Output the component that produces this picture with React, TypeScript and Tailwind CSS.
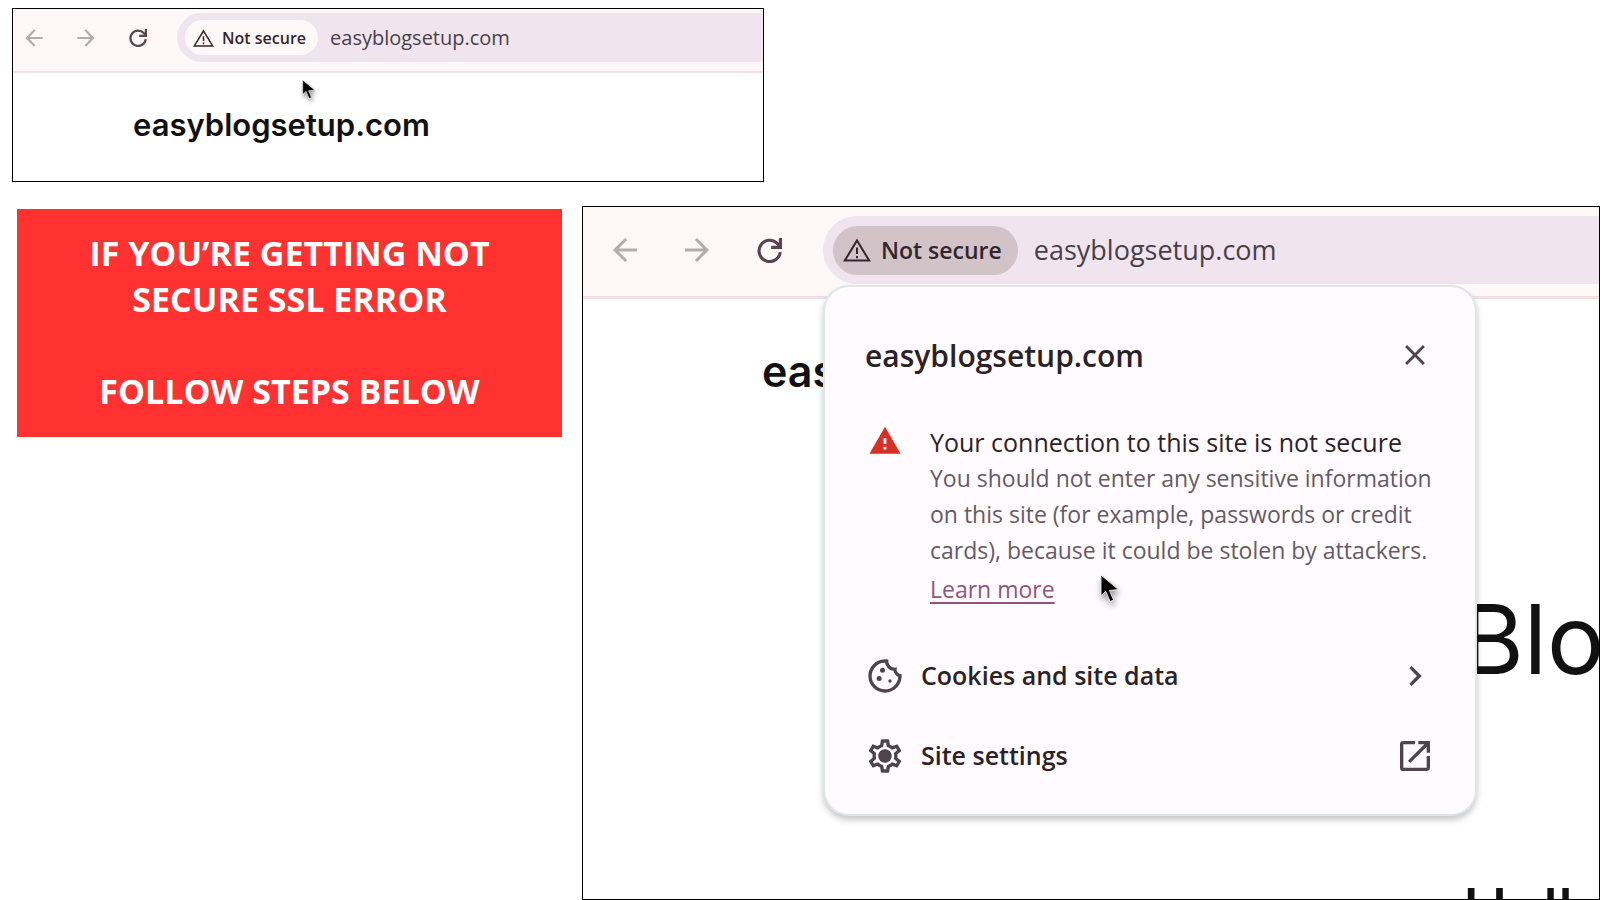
import {
  MdArrowBack,
  MdArrowForward,
  MdChevronRight,
  MdClose,
  MdOpenInNew,
  MdOutlineCookie,
  MdOutlineSettings,
  MdWarning,
} from 'react-icons/md'

const site = 'easyblogsetup.com'

function ReloadIcon({ className }: { className: string }) {
  return (
    <svg viewBox="0 0 24 24" fill="none" stroke="currentColor" strokeWidth="3" className={className} aria-hidden="true">
      <path d="M22.3 13.5A10.2 10.2 0 1 1 19.6 5.4L22.2 8" />
      <path d="M22.5 0V9H13.6" />
    </svg>
  )
}

function AlertIcon({ className }: { className: string }) {
  return (
    <svg viewBox="0 0 28 24" fill="none" stroke="currentColor" strokeWidth="2" className={className} aria-hidden="true">
      <path d="M14 2.4L26.2 22.6H1.8Z" />
      <path d="M14 9.5V16M14 18V20.2" />
    </svg>
  )
}

function GearIcon({ className }: { className: string }) {
  return (
    <svg viewBox="0 0 24 24" className={className} aria-hidden="true">
      <MdOutlineSettings size={24} />
      <circle cx="12" cy="12" r="3.8" fill="currentColor" />
    </svg>
  )
}

function Pointer({ className }: { className: string }) {
  return (
    <svg viewBox="0 0 20 28" className={className} aria-hidden="true">
      <path
        d="M1 0V20.5L5.8 16.4L10.2 26.6L13.6 25L9.4 15.4L18.5 14.6Z"
        fill="#000"
        stroke="#fff"
        strokeWidth="0.8"
      />
    </svg>
  )
}

function SmallBar() {
  return (
    <div className="flex items-center gap-[26px] border-b-2 border-[#f3dfe5] bg-[#fff8f8] pt-1 pb-[9px] pl-2">
      <button aria-label="Back" className="text-[#b3abac]">
        <MdArrowBack size={26} />
      </button>
      <button aria-label="Forward" className="text-[#b3abac]">
        <MdArrowForward size={26} />
      </button>
      <button aria-label="Reload" className="flex w-[26px] justify-center text-[#5a4450]">
        <ReloadIcon className="size-[18px]" />
      </button>
      <div className="flex h-[49px] min-w-0 flex-1 items-center gap-3 rounded-l-full bg-[#f0e5ef] pl-2">
        <button className="flex h-[35px] shrink-0 items-center gap-2 rounded-full bg-[#fff8f8] pr-3 pl-2 text-base font-semibold text-[#33262c]">
          <AlertIcon className="w-[21px]" />
          Not secure
        </button>
        <input
          aria-label="Address"
          readOnly
          defaultValue={site}
          className="min-w-0 flex-1 bg-transparent text-xl text-[#4a3f47] outline-none"
        />
      </div>
    </div>
  )
}

function LargeBar() {
  return (
    <div className="flex items-center gap-9 border-b-3 border-[#f3dfe5] bg-[#fff8f8] pt-[9px] pb-3 pl-6">
      <button aria-label="Back" className="text-[#b3abac]">
        <MdArrowBack size={36} />
      </button>
      <button aria-label="Forward" className="text-[#b3abac]">
        <MdArrowForward size={36} />
      </button>
      <button aria-label="Reload" className="flex w-9 justify-center text-[#5a4450]">
        <ReloadIcon className="size-[25px]" />
      </button>
      <div className="flex h-[68px] min-w-0 flex-1 items-center gap-4 rounded-l-full bg-[#f0e5ef] pl-[10px]">
        <button className="flex h-[49px] shrink-0 items-center gap-[10px] rounded-full bg-[#d2c3c8] pr-4 pl-[10px] text-[23px] font-semibold text-[#33262c]">
          <AlertIcon className="w-7" />
          Not secure
        </button>
        <input
          aria-label="Address"
          readOnly
          defaultValue={site}
          className="min-w-0 flex-1 bg-transparent text-[27px] text-[#4a3f47] outline-none"
        />
      </div>
    </div>
  )
}

function SiteInfo() {
  return (
    <div
      role="dialog"
      aria-labelledby="site-name"
      className="absolute top-20 left-[242px] w-[650px] rounded-3xl bg-[#fffbff] px-10 pt-12 pb-[18px] text-[#2b2228] shadow-[0_0_0_2px_#dfe6e7,0_4px_6px_2px_#00000038]"
    >
      <div className="flex h-10 items-center justify-between">
        <h2 id="site-name" className="text-[30px] font-semibold">
          {site}
        </h2>
        <button aria-label="Close" className="flex w-10 justify-center text-[#4f444a]">
          <MdClose size={34} />
        </button>
      </div>

      <div className="mt-[49px] flex gap-[25px]">
        <div className="flex w-10 shrink-0 justify-center">
          <MdWarning size={34} className="text-[#d93025]" />
        </div>
        <div className="text-[23px] leading-9 whitespace-nowrap">
          <p className="text-[25px] leading-9">Your connection to this site is not secure</p>
          <p className="text-[#655b62]">
            You should not enter any sensitive information
            <br />
            on this site (for example, passwords or credit
            <br />
            cards), because it could be stolen by attackers.
          </p>
          <a href="#learn-more" className="mt-[3px] block w-fit text-[#8f5580] underline underline-offset-4">
            Learn more
          </a>
        </div>
      </div>

      <div className="mt-[29px] text-[25px] font-semibold">
        <button className="flex h-20 w-full items-center gap-4">
          <MdOutlineCookie size={40} className="text-[#4f444a]" />
          Cookies and site data
          <MdChevronRight size={40} className="ml-auto text-[#4f444a]" />
        </button>
        <button className="flex h-20 w-full items-center gap-4">
          <GearIcon className="size-10 text-[#4f444a]" />
          Site settings
          <MdOpenInNew size={40} className="ml-auto text-[#4f444a]" />
        </button>
      </div>

      <Pointer className="absolute top-[288px] left-[275px] w-5 drop-shadow-[1px_4px_3px_#00000070]" />
    </div>
  )
}

export default function App() {
  return (
    <div className="flex h-screen min-h-[900px] flex-col gap-6 overflow-hidden bg-white pt-2 font-['Open_Sans',sans-serif]">
      <section className="relative ml-3 w-[47%] border border-black bg-white">
        <SmallBar />
        <div className="h-[108px] pt-7 pl-[120px]">
          <h2 className="font-[Inter,sans-serif] text-[31px] leading-[48px] font-semibold text-[#111]">{site}</h2>
        </div>
        <Pointer className="absolute top-[71px] left-[289px] w-[14px] drop-shadow-[1px_3px_2px_#00000070]" />
      </section>

      <div className="flex min-h-0 flex-1 items-start gap-5 pl-[17px]">
        <section className="mt-[3px] flex h-[228px] w-[545px] shrink-0 items-center justify-center bg-[#ff3131] pb-[2px]">
          <p className="text-center text-[34px] leading-[46px] font-bold text-white">
            IF YOU’RE GETTING NOT
            <br />
            SECURE SSL ERROR
            <br />
            <br />
            FOLLOW STEPS BELOW
          </p>
        </section>

        <section className="relative h-full min-w-0 flex-1 overflow-hidden border border-black bg-white">
          <LargeBar />
          <div className="font-[Inter,sans-serif] whitespace-nowrap text-[#111]">
            <h2 className="pt-[42px] pl-[179px] text-[43px] leading-[60px] font-semibold">eas</h2>
            <h1 className="pt-[178px] pl-[878px] text-[96px] leading-[120px]">Blo</h1>
            <p className="pt-[181px] pl-[880px] text-[60px] leading-[60px] font-medium">Hello</p>
          </div>
          <SiteInfo />
        </section>
      </div>
    </div>
  )
}
